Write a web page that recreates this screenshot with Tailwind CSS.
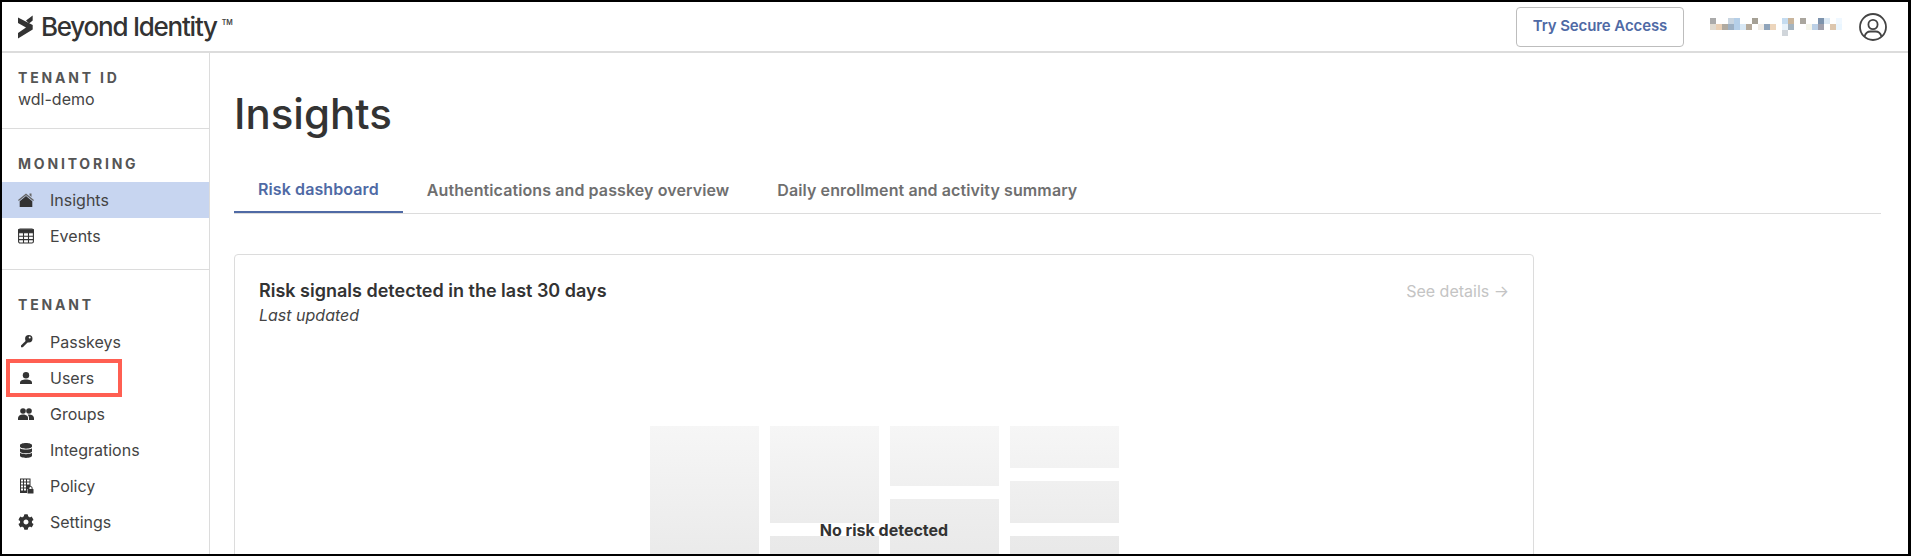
<!DOCTYPE html>
<html lang="en">

<head>
    <meta charset="UTF-8" />
    <meta name="viewport" content="width=device-width, initial-scale=1.0" />
    <title>Insights</title>
    <script src="https://cdn.jsdelivr.net/npm/@tailwindcss/browser@4"></script>
</head>

<body class="bg-white overflow-hidden font-['Inter',sans-serif] text-[#333]">
    <div class="h-screen flex flex-col border-black border-t-2 border-l-2 border-b-2 border-r-[3px] overflow-hidden">

        <!-- Top bar -->
        <header class="h-[51px] shrink-0 flex items-center border-b-2 border-[#dcdcdc] pl-4 pr-[21px]">
            <svg class="w-[15px] h-[24px]" viewBox="0 0 15 24" fill="#333">
                <polygon points="0,2.500 14.700,10 14.700,14.500 0,23.500 0,18 8,12.500 0,8" />
                <polygon points="8,5.500 14.700,.5 14.700,5.500 11,8.500" />
            </svg>
            <span class="ml-[8px] text-[26px] leading-none font-medium tracking-[-1.25px] text-[#333]">Beyond Identity</span>
            <span class="ml-[5px] mb-[9px] text-[7px] leading-none font-semibold text-[#444]">TM</span>

            <button class="ml-auto w-[168px] h-10 border border-[#bdbdbd] rounded-[4px] text-[15px] tracking-[-0.1px] font-semibold text-[#4f6aa5]">Try Secure Access</button>

            <!-- blurred user name -->
            <svg class="ml-[26px] w-[132px] h-[18px]" viewBox="0 0 132 18">
                <rect x="0" y="0" width="6" height="6" fill="#aaaaaa" />
                <rect x="18" y="0" width="6" height="6" fill="#c9d5e0" />
                <rect x="24" y="0" width="6" height="6" fill="#b5cfe8" />
                <rect x="42" y="0" width="6" height="6" fill="#a5a095" />
                <rect x="72" y="0" width="6" height="6" fill="#c5dcf0" />
                <rect x="78" y="0" width="6" height="6" fill="#c9b59c" />
                <rect x="90" y="0" width="6" height="6" fill="#aaa69e" />
                <rect x="108" y="0" width="6" height="6" fill="#7d93ad" />
                <rect x="114" y="0" width="6" height="6" fill="#ddeaf5" />
                <rect x="126" y="0" width="6" height="6" fill="#f0f8ff" />
                <rect x="0" y="6" width="6" height="6" fill="#e0dad0" />
                <rect x="6" y="6" width="6" height="6" fill="#e8cfb5" />
                <rect x="12" y="6" width="6" height="6" fill="#b0aaa0" />
                <rect x="18" y="6" width="6" height="6" fill="#9db0c3" />
                <rect x="24" y="6" width="6" height="6" fill="#b5cfe8" />
                <rect x="30" y="6" width="6" height="6" fill="#d8e8f5" />
                <rect x="36" y="6" width="6" height="6" fill="#b5aa9b" />
                <rect x="48" y="6" width="6" height="6" fill="#f0ebe4" />
                <rect x="54" y="6" width="6" height="6" fill="#8fa4ba" />
                <rect x="60" y="6" width="6" height="6" fill="#ecd5bc" />
                <rect x="72" y="6" width="6" height="6" fill="#e8f2fa" />
                <rect x="78" y="6" width="6" height="6" fill="#a5b4c0" />
                <rect x="96" y="6" width="6" height="6" fill="#f5f5ea" />
                <rect x="102" y="6" width="6" height="6" fill="#bcd0e6" />
                <rect x="108" y="6" width="6" height="6" fill="#a0a0ac" />
                <rect x="120" y="6" width="6" height="6" fill="#dcc6ae" />
                <rect x="126" y="6" width="6" height="6" fill="#eaf6ff" />
                <rect x="72" y="12" width="6" height="6" fill="#d0d5da" />
            </svg>

            <!-- avatar -->
            <svg class="ml-[17px] w-[28px] h-[28px]" viewBox="0 0 28 28" fill="none" stroke="#444" stroke-width="1.8">
                <circle cx="14" cy="14" r="13" />
                <circle cx="14" cy="11.500" r="4.600" />
                <path d="M5.500 23.500c1-3.600 3.600-5 6-5h5c2.400 0 5 1.400 6 5" />
            </svg>
        </header>

        <div class="flex flex-1 min-h-0">

            <!-- Sidebar -->
            <aside class="w-[208px] shrink-0 border-r border-[#dcdcdc]">
                <div class="h-[76px] pl-4 pt-4 border-b border-[#dcdcdc]">
                    <div class="text-[14px] leading-[18px] font-bold tracking-[2.8px] text-[#555]">TENANT ID</div>
                    <div class="mt-[2px] text-[16px] leading-[20px] text-[#444]">wdl-demo</div>
                </div>

                <div class="h-[141px] border-b border-[#dcdcdc]">
                    <div class="pl-4 pt-[26px] pb-[9px] text-[14px] leading-[18px] font-bold tracking-[2.8px] text-[#555]">MONITORING</div>
                    <a class="h-9 pl-4 flex items-center gap-4 bg-[#c7d5f0] text-[16px] text-[#444]">
                        <svg class="w-4 h-4" viewBox="0 0 16 16" fill="#333">
                            <path d="M0 8 8 1.500 16 8l-.8 1L8 3.200.8 9z" fill="#666" />
                            <path d="M11.500 1.500h2v3.500l-2-1.700z" fill="#666" />
                            <path d="M8 4l6.300 5.200V15H1.700V9.200z" />
                        </svg>
                        Insights
                    </a>
                    <a class="h-9 pl-4 flex items-center gap-4 text-[16px] text-[#444]">
                        <svg class="w-4 h-4" viewBox="0 0 16 16" fill="none" stroke="#333" stroke-width="1.100">
                            <rect x=".6" y="1" width="14.800" height="14" rx="1.500" />
                            <path d="M.6 1.800h14.800V4.800H.6z" fill="#333" />
                            <path d="M.6 8.200h14.800M.6 11.600h14.800M5.500 4.800V15M10.500 4.800V15" />
                        </svg>
                        Events
                    </a>
                </div>

                <div>
                    <div class="pl-4 pt-[26px] pb-[10px] text-[14px] leading-[18px] font-bold tracking-[2.8px] text-[#555]">TENANT</div>
                    <a class="h-9 pl-4 flex items-center gap-4 text-[16px] text-[#444]">
                        <svg class="w-4 h-4" viewBox="0 0 16 16" fill="#333">
                            <path fill-rule="evenodd" d="M10.800 1a3.700 3.700 0 1 1 0 7.400 3.700 3.700 0 0 1 0-7.400zm.9 1.600a1 1 0 1 0 0 2 1 1 0 0 0 0-2z" />
                            <path d="M8.300 6.200 3 11.500v1.800h1.800l5.300-5.300z" />
                        </svg>
                        Passkeys
                    </a>
                    <a class="relative h-9 pl-4 flex items-center gap-4 text-[16px] text-[#444]">
                        <svg class="w-4 h-4" viewBox="0 0 16 16" fill="#333">
                            <circle cx="8" cy="5.200" r="3.200" />
                            <path d="M2 14v-1.200C2 10.600 4.500 9.600 8 9.600s6 1 6 3.200V14z" />
                        </svg>
                        Users
                        <!-- annotation box -->
                        <span class="absolute left-[4px] top-[-1px] w-[116px] h-[38px] border-4 border-[#ff5f52]"></span>
                    </a>
                    <a class="h-9 pl-4 flex items-center gap-4 text-[16px] text-[#444]">
                        <svg class="w-4 h-4" viewBox="0 0 16 16" fill="#333">
                            <circle cx="5" cy="5" r="2.800" />
                            <circle cx="11" cy="5" r="2.800" />
                            <path d="M0 14v-2c0-2 2-3.600 5-3.600 1.500 0 2.800.4 3.600 1.100C9.800 10.300 10 11 10 12v2z" />
                            <path d="M11 14v-2c0-1.400-.4-2.500-1.300-3.300.5-.2 1-.3 1.500-.3 2.800 0 4.800 1.600 4.800 3.600v2z" />
                        </svg>
                        Groups
                    </a>
                    <a class="h-9 pl-4 flex items-center gap-4 text-[16px] text-[#444]">
                        <span class="w-4 h-4 flex items-center justify-center">
                            <svg class="w-[12px] h-[15px]" viewBox="0 0 448 512" preserveAspectRatio="none" fill="#333">
                                <path d="M448 73.143v45.714C448 159.143 347.667 192 224 192S0 159.143 0 118.857V73.143C0 32.857 100.333 0 224 0s224 32.857 224 73.143zM448 176v102.857C448 319.143 347.667 352 224 352S0 319.143 0 278.857V176c48.125 33.143 136.208 48.572 224 48.572S399.874 209.143 448 176zm0 160v102.857C448 479.143 347.667 512 224 512S0 479.143 0 438.857V336c48.125 33.143 136.208 48.572 224 48.572S399.874 369.143 448 336z" />
                            </svg>
                        </span>
                        Integrations
                    </a>
                    <a class="h-9 pl-4 flex items-center gap-4 text-[16px] text-[#444]">
                        <svg class="w-4 h-4" viewBox="0 0 16 16">
                            <path d="M2 .5h10.500V9H11v2H9v4H2z" fill="#333" />
                            <path d="M3 1.500h2v2H3zM6 1.500h2v2H6zM9 1.500h2.500v2H9zM3 4.500h2v2H3zM6 4.500h2v2H6zM9 4.500h2.500v2H9zM3 7.500h2v2H3zM6 7.500h2v2H6zM3 10.500h2v2H3zM6 10.500h2v2H6z" fill="#fff" />
                            <rect x="9.500" y="11" width="6" height="4.500" rx=".6" fill="#333" />
                            <path d="M10.900 11.200V10a1.600 1.600 0 0 1 3.200 0v1.200" fill="none" stroke="#333" stroke-width="1" />
                        </svg>
                        Policy
                    </a>
                    <a class="h-9 pl-4 flex items-center gap-4 text-[16px] text-[#444]">
                        <svg class="w-4 h-4" viewBox="0 0 512 512" fill="#333">
                            <path d="M487.400 315.700l-42.600-24.600c4.300-23.200 4.300-47 0-70.200l42.600-24.600c4.900-2.800 7.100-8.600 5.500-14-11.100-35.600-30-67.800-54.700-94.600-3.800-4.100-10-5.100-14.800-2.300L380.800 110c-17.900-15.400-38.500-27.300-60.800-35.100V25.800c0-5.600-3.900-10.500-9.400-11.700-36.700-8.200-74.300-7.800-109.200 0-5.500 1.200-9.400 6.100-9.400 11.700V75c-22.200 7.900-42.800 19.800-60.800 35.100L88.700 85.500c-4.900-2.800-11-1.900-14.800 2.300-24.700 26.700-43.600 58.900-54.700 94.600-1.700 5.400.6 11.200 5.500 14L67.300 221c-4.300 23.200-4.300 47 0 70.200l-42.600 24.600c-4.900 2.800-7.100 8.600-5.500 14 11.100 35.600 30 67.800 54.700 94.600 3.800 4.100 10 5.100 14.800 2.300l42.600-24.600c17.900 15.400 38.500 27.300 60.800 35.100v49.200c0 5.600 3.900 10.500 9.400 11.700 36.700 8.200 74.300 7.800 109.200 0 5.500-1.200 9.400-6.100 9.400-11.700v-49.200c22.200-7.900 42.800-19.800 60.800-35.100l42.600 24.600c4.900 2.800 11 1.900 14.800-2.300 24.700-26.700 43.600-58.900 54.700-94.600 1.500-5.500-.7-11.300-5.600-14.100zM256 336c-44.100 0-80-35.900-80-80s35.900-80 80-80 80 35.900 80 80-35.900 80-80 80z" />
                        </svg>
                        Settings
                    </a>
                </div>
            </aside>

            <!-- Main -->
            <main class="flex-1 min-w-0 pl-6 pr-[27px] pt-[37px]">
                <h1 class="text-[42px] leading-[48px] font-medium text-[#333]">Insights</h1>

                <!-- Tabs -->
                <div class="mt-[33px] flex border-b border-[#dcdcdc]">
                    <a class="h-[42px] px-6 pb-[4px] flex items-center border-b-2 border-[#4f6aa5] text-[16px] tracking-[0.1px] font-semibold text-[#4f6aa5]">Risk dashboard</a>
                    <a class="h-[42px] px-6 pb-[4px] flex items-center text-[16px] tracking-[0.1px] font-semibold text-[#6f6f6f]">Authentications and passkey overview</a>
                    <a class="h-[42px] px-6 pb-[4px] flex items-center text-[16px] tracking-[0.1px] font-semibold text-[#6f6f6f]">Daily enrollment and activity summary</a>
                </div>

                <!-- Card -->
                <section class="relative mt-[40px] w-[1300px] h-[400px] border border-[#dcdcdc] rounded-[4px] px-6 pt-[24px]">
                    <div class="flex justify-between">
                        <div>
                            <h2 class="text-[18px] leading-[24px] font-semibold text-[#333]">Risk signals detected in the last 30 days</h2>
                            <p class="text-[16px] leading-[24px] italic text-[#444]">Last updated</p>
                        </div>
                        <a class="h-6 text-[16px] leading-6 text-[#c4c4c4]">See details →</a>
                    </div>

                    <!-- Empty treemap -->
                    <div class="mt-[99px] flex justify-center gap-[11px]">
                        <div class="w-[109px] h-[200px] bg-gradient-to-b from-[#f6f6f6] to-[#e4e4e4]"></div>
                        <div class="w-[109px] flex flex-col gap-[13px]">
                            <div class="h-[97px] bg-gradient-to-b from-[#f6f6f6] to-[#ececec]"></div>
                            <div class="h-[90px] bg-gradient-to-b from-[#eaeaea] to-[#e4e4e4]"></div>
                        </div>
                        <div class="w-[109px] flex flex-col gap-[13px]">
                            <div class="h-[60px] bg-gradient-to-b from-[#f6f6f6] to-[#f0f0f0]"></div>
                            <div class="h-[120px] bg-gradient-to-b from-[#eeeeee] to-[#e4e4e4]"></div>
                        </div>
                        <div class="w-[109px] flex flex-col gap-[13px]">
                            <div class="h-[42px] bg-gradient-to-b from-[#f6f6f6] to-[#f2f2f2]"></div>
                            <div class="h-[42px] bg-gradient-to-b from-[#f0f0f0] to-[#ececec]"></div>
                            <div class="h-[90px] bg-gradient-to-b from-[#eaeaea] to-[#e4e4e4]"></div>
                        </div>
                    </div>
                    <p class="absolute left-0 right-0 top-[263px] text-center text-[16px] leading-6 font-bold text-[#333]">No risk detected</p>
                </section>
            </main>
        </div>
    </div>
</body>

</html>
